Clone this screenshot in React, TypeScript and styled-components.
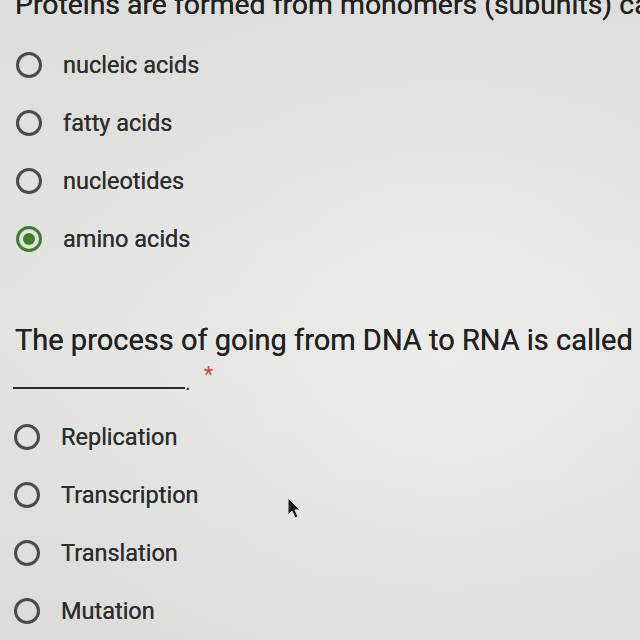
import { FC } from 'react'
import styled, { createGlobalStyle } from 'styled-components'

const Global = createGlobalStyle`
  html, body { margin: 0; padding: 0; }
  body {
    width: 640px;
    height: 640px;
    overflow: hidden;
    font-family: Roboto, "Liberation Sans", sans-serif;
  }
`

type Opt = { label: string; checked?: boolean }

const q1: Opt[] = [
  { label: 'nucleic acids' },
  { label: 'fatty acids' },
  { label: 'nucleotides' },
  { label: 'amino acids', checked: true },
]

const q2: Opt[] = [
  { label: 'Replication' },
  { label: 'Transcription' },
  { label: 'Translation' },
  { label: 'Mutation' },
]

const App: FC = () => {
  return (
    <Page>
      <Global />
      <Title $top={-15} $size={28.4}>Proteins are formed from monomers (subunits) called</Title>
      <OptionList $top={26} $left={16}>
        {q1.map((o) => (
          <Option key={o.label}>
            <Radio $checked={o.checked} />
            <Label>{o.label}</Label>
          </Option>
        ))}
      </OptionList>

      <Title $top={67} $size={29}>The process of going from DNA to RNA is called</Title>
      <BlankRow>
        <Blank />
        <Dot>.</Dot>
        <Star>*</Star>
      </BlankRow>
      <OptionList $top={29} $left={14}>
        {q2.map((o) => (
          <Option key={o.label}>
            <Radio $checked={o.checked} />
            <Label>{o.label}</Label>
          </Option>
        ))}
      </OptionList>

      <Cursor width="16" height="24" viewBox="0 0 16 24">
        <path d="M1 1 L1 18 L5 14 L8 21 L11 20 L8 13 L13 13 Z" fill="#1a1a1a" stroke="#e8e8e6" strokeWidth="1" />
      </Cursor>
    </Page>
  )
}

const Page = styled.div`
  position: relative;
  width: 640px;
  height: 640px;
  overflow: hidden;
  box-sizing: border-box;
  padding-left: 15px;
  background:
    radial-gradient(ellipse 70% 60% at 70% 55%, #ebebe9 0%, rgba(235,235,233,0) 100%),
    linear-gradient(180deg, #dddddb 0%, #e3e3e1 50%, #dcdcda 100%);
  color: #2a2a2a;
`

const Title = styled.div<{ $top: number; $size: number }>`
  margin-top: ${(p) => p.$top}px;
  font-size: ${(p) => p.$size}px;
  line-height: 40px;
  white-space: nowrap;
  color: #222;
  text-shadow: 0 0 0.6px #222;
`

const OptionList = styled.div<{ $top: number; $left: number }>`
  display: flex;
  flex-direction: column;
  gap: 30px;
  margin-top: ${(p) => p.$top}px;
  margin-left: ${(p) => p.$left - 15}px;
`

const Option = styled.div`
  display: flex;
  align-items: center;
  gap: 21px;
  height: 28px;
`

const Radio = styled.span<{ $checked?: boolean }>`
  box-sizing: border-box;
  width: 26px;
  height: 26px;
  border-radius: 50%;
  border: 3px solid ${(p) => (p.$checked ? '#3f7f2c' : '#4a4a4a')};
  display: flex;
  align-items: center;
  justify-content: center;
  &::after {
    content: '';
    display: ${(p) => (p.$checked ? 'block' : 'none')};
    width: 12px;
    height: 12px;
    border-radius: 50%;
    background: #3f7f2c;
  }
`

const Label = styled.span`
  font-size: 23.5px;
  color: #2e2e2e;
  text-shadow: 0 0 0.5px #2e2e2e;
`

const BlankRow = styled.div`
  display: flex;
  align-items: flex-end;
  height: 34px;
  margin-left: -2px;
`

const Blank = styled.span`
  width: 172px;
  height: 2px;
  background: #2a2a2a;
  margin-bottom: 5px;
`

const Dot = styled.span`
  font-size: 22px;
  line-height: 22px;
  color: #333;
`

const Star = styled.span`
  align-self: flex-start;
  margin-top: 4px;
  margin-left: 13px;
  font-size: 22px;
  line-height: 22px;
  color: #d0473b;
`

const Cursor = styled.svg`
  position: absolute;
  left: 287px;
  top: 497px;
`

export default App
